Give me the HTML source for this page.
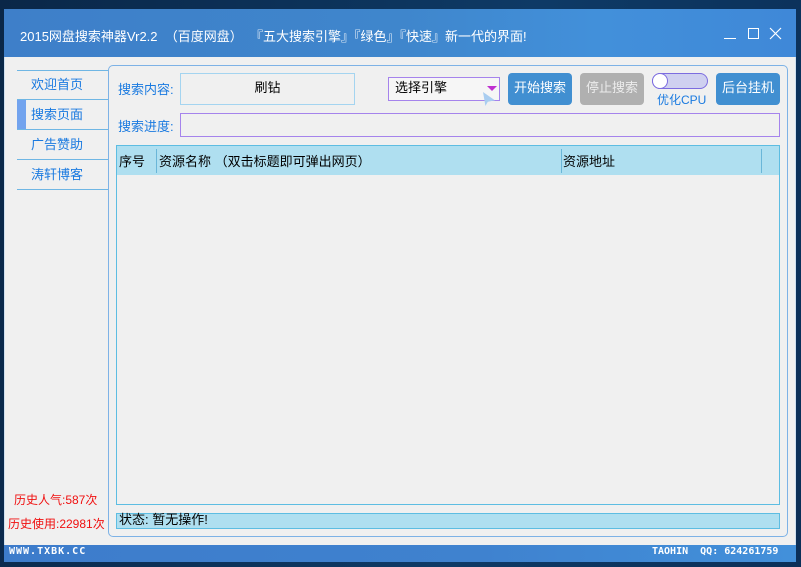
<!DOCTYPE html>
<html><head><meta charset="utf-8"><style>
*{margin:0;padding:0;box-sizing:border-box}
body{width:801px;height:567px;overflow:hidden;background:#0b2d52;font-family:"Liberation Sans","Noto Sans CJK SC",sans-serif;font-size:13px;position:relative}
.a{position:absolute}
</style></head><body>
<div class="a" style="left:0;top:0;width:801px;height:567px;background:linear-gradient(100deg,#0a2748,#0e3a66 60%,#0b2f58)"></div>
<div class="a" style="left:4px;top:9px;width:792px;height:553px;background:#f0f0f0;border-left:1px solid #cfe0f0;border-right:1px solid #cfe0f0"></div>
<div class="a" style="left:4px;top:9px;width:792px;height:48px;background:linear-gradient(90deg,#3e7fc9,#3f86cc 50%,#4290da 75%,#3f88d8)"></div>
<div class="a" style="left:20px;top:26px;color:#fff;font-size:13px;white-space:pre">2015网盘搜索神器Vr2.2  （百度网盘）  『五大搜索引擎』『绿色』『快速』新一代的界面!</div>
<div class="a" style="left:724px;top:38px;width:12px;height:1px;background:#fff"></div>
<div class="a" style="left:748px;top:28px;width:11px;height:11px;border:1px solid #fff"></div>
<svg class="a" style="left:769px;top:27px" width="13" height="13"><path d="M1 1L12 12M12 1L1 12" stroke="#fff" stroke-width="1.2"/></svg>
<!-- nav -->
<div class="a" style="left:17px;top:70px;width:91px;height:1px;background:#6fb6e4"></div>
<div class="a" style="left:17px;top:99px;width:91px;height:1px;background:#6fb6e4"></div>
<div class="a" style="left:17px;top:129px;width:91px;height:1px;background:#6fb6e4"></div>
<div class="a" style="left:17px;top:159px;width:91px;height:1px;background:#6fb6e4"></div>
<div class="a" style="left:17px;top:189px;width:91px;height:1px;background:#6fb6e4"></div>
<div class="a" style="left:17px;top:100px;width:9px;height:29px;background:#72a3ee"></div>
<div class="a" style="left:31px;top:74px;color:#1a7ae0">欢迎首页</div>
<div class="a" style="left:31px;top:104px;color:#1a7ae0">搜索页面</div>
<div class="a" style="left:31px;top:134px;color:#1a7ae0">广告赞助</div>
<div class="a" style="left:31px;top:164px;color:#1a7ae0">涛轩博客</div>
<div class="a" style="left:14px;top:491px;color:#f01010;font-size:12px">历史人气:587次</div>
<div class="a" style="left:8px;top:515px;color:#f01010;font-size:12px">历史使用:22981次</div>
<!-- main panel -->
<div class="a" style="left:108px;top:65px;width:680px;height:472px;border:1px solid #7db2e6;border-radius:5px"></div>
<div class="a" style="left:118px;top:79px;color:#1a7ae0">搜索内容:</div>
<div class="a" style="left:180px;top:73px;width:175px;height:32px;border:1px solid #a4d4f0;text-align:center;line-height:28px;color:#000">刷钻</div>
<div class="a" style="left:388px;top:77px;width:112px;height:24px;border:1px solid #a583ec;background:#f6f6f6;padding-left:6px;line-height:20px;color:#000">选择引擎</div>
<div class="a" style="left:487px;top:86px;width:0;height:0;border-left:5px solid transparent;border-right:5px solid transparent;border-top:5px solid #c030d0"></div>
<div class="a" style="left:483px;top:92px;width:12px;height:14px;background:#a9cdf0;clip-path:polygon(0 0,100% 60%,40% 70%,20% 100%)"></div>
<div class="a" style="left:508px;top:73px;width:64px;height:32px;background:#418fd1;border-radius:4px;color:#fff;text-align:center;line-height:29px">开始搜索</div>
<div class="a" style="left:580px;top:73px;width:64px;height:32px;background:#b0b0b0;border-radius:4px;color:#ececec;text-align:center;line-height:29px">停止搜索</div>
<div class="a" style="left:652px;top:73px;width:56px;height:16px;background:#cfd0f0;border:1px solid #7c6ce0;border-radius:8px"></div>
<div class="a" style="left:652px;top:73px;width:16px;height:16px;background:#fff;border:1px solid #7c6ce0;border-radius:8px"></div>
<div class="a" style="left:657px;top:91px;color:#1a7ae0;font-size:12px">优化CPU</div>
<div class="a" style="left:716px;top:73px;width:64px;height:32px;background:#418fd1;border-radius:4px;color:#fff;text-align:center;line-height:29px">后台挂机</div>
<div class="a" style="left:118px;top:116px;color:#1a7ae0">搜索进度:</div>
<div class="a" style="left:180px;top:113px;width:600px;height:24px;border:1px solid #a583ec"></div>
<!-- table -->
<div class="a" style="left:116px;top:145px;width:664px;height:360px;border:1px solid #5dbde2"></div>
<div class="a" style="left:117px;top:146px;width:662px;height:29px;background:#afdff0"></div>
<div class="a" style="left:156px;top:149px;width:1px;height:24px;background:#6ab6d8"></div>
<div class="a" style="left:561px;top:149px;width:1px;height:24px;background:#6ab6d8"></div>
<div class="a" style="left:761px;top:149px;width:1px;height:24px;background:#6ab6d8"></div>
<div class="a" style="left:119px;top:151px;color:#000">序号</div>
<div class="a" style="left:159px;top:151px;color:#000">资源名称 （双击标题即可弹出网页）</div>
<div class="a" style="left:563px;top:151px;color:#000">资源地址</div>
<div class="a" style="left:116px;top:513px;width:664px;height:16px;background:#afdff0;border:1px solid #5dbde2;padding-left:2px;line-height:12px;color:#000">状态: 暂无操作!</div>
<!-- bottom bar -->
<div class="a" style="left:4px;top:545px;width:792px;height:17px;background:linear-gradient(90deg,#3d7ccb,#3f82cf 60%,#4290da)"></div>
<div class="a" style="left:9px;top:546px;color:#fff;font-size:10px;font-weight:bold;letter-spacing:1px;font-family:'DejaVu Sans Mono',monospace">WWW.TXBK.CC</div>
<div class="a" style="left:652px;top:546px;color:#fff;font-size:10px;font-weight:bold;letter-spacing:0px;font-family:'DejaVu Sans Mono',monospace;white-space:pre">TAOHIN  QQ: 624261759</div>
</body></html>
